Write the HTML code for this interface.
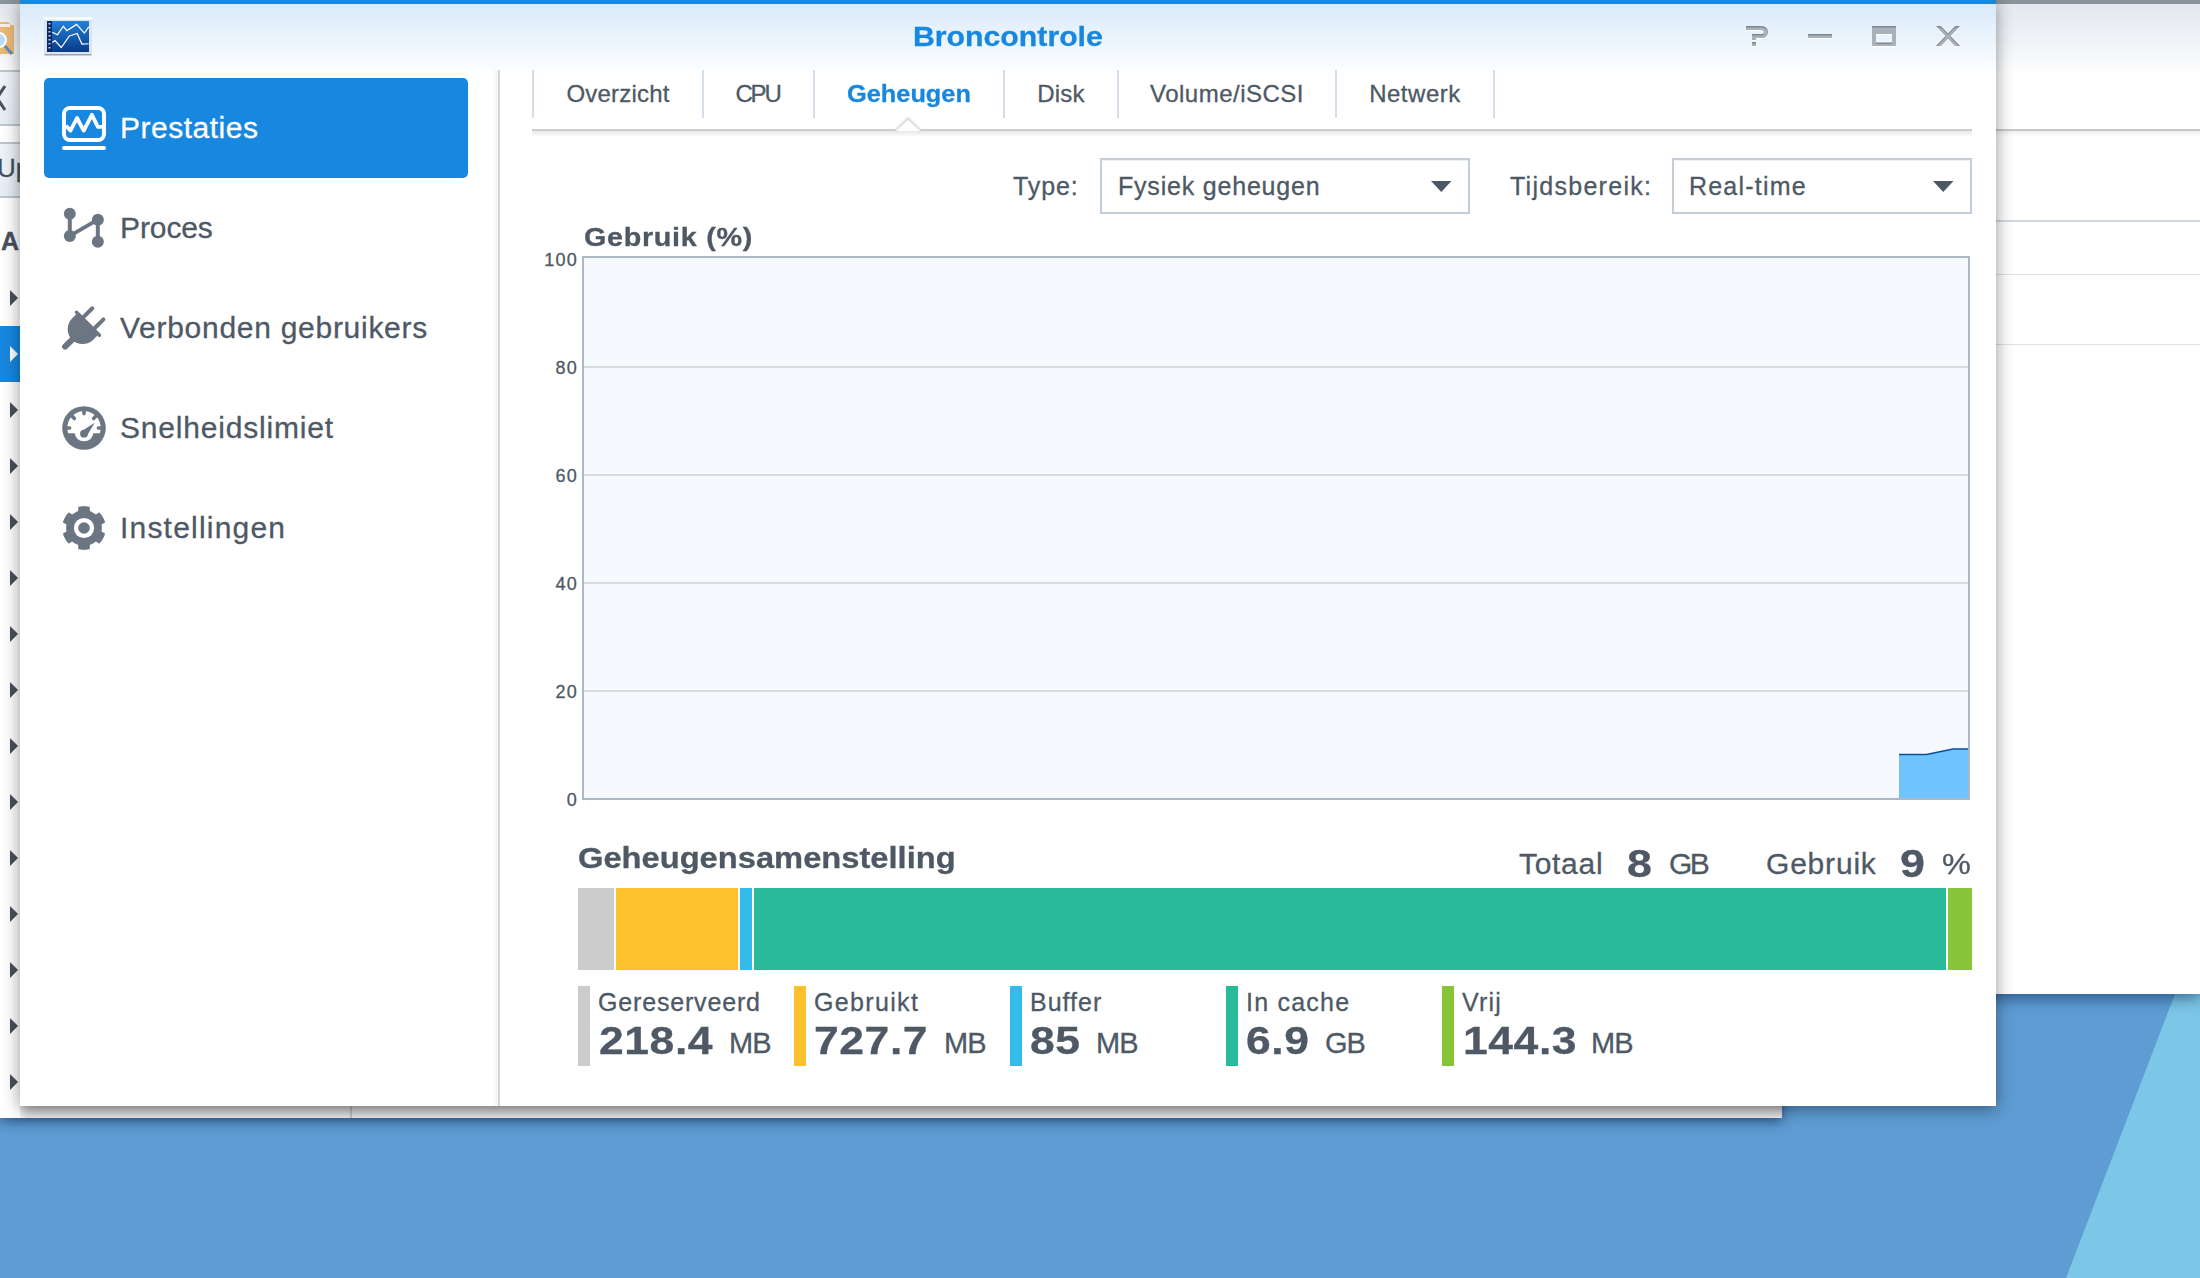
<!DOCTYPE html>
<html><head><meta charset="utf-8">
<style>
*{margin:0;padding:0;box-sizing:border-box}
html,body{width:2200px;height:1278px;overflow:hidden}
body{position:relative;background:#5e9cd3;font-family:"Liberation Sans",sans-serif;color:#4e5965}
.a{position:absolute}
.t{position:absolute;white-space:nowrap;line-height:1;-webkit-text-stroke:.3px currentColor}
</style></head><body>
<!-- desktop -->
<svg class="a" style="left:0;top:0" width="2200" height="1278">
  <polygon points="2175,994 2200,994 2200,1278 2066,1278" fill="#7cc6e7"/>
</svg>

<!-- right background window -->
<div class="a" style="left:1900px;top:0;width:300px;height:994px;background:#fff;box-shadow:0 4px 14px rgba(0,30,70,.55)">
  <div class="a" style="left:0;top:0;width:300px;height:4px;background:#8b939b"></div>
  <div class="a" style="left:0;top:4px;width:300px;height:66px;background:linear-gradient(#e3e8ef,#fbfcfd)"></div>
  <div class="a" style="left:0;top:129px;width:300px;height:2px;background:#c6c8ca"></div>
  <div class="a" style="left:0;top:131px;width:300px;height:6px;background:linear-gradient(rgba(0,0,0,.06),rgba(0,0,0,0))"></div>
  <div class="a" style="left:0;top:220px;width:300px;height:2px;background:#cfd9e3"></div>
  <div class="a" style="left:0;top:274px;width:300px;height:1px;background:#dbe2ea"></div>
  <div class="a" style="left:0;top:344px;width:300px;height:1px;background:#dbe2ea"></div>
</div>

<!-- bottom background window -->
<div class="a" style="left:0;top:900px;width:1782px;height:218px;background:#fff;box-shadow:0 3px 12px rgba(0,30,70,.6)">
  <div class="a" style="left:20px;top:206px;width:1762px;height:12px;background:linear-gradient(#c4c4c4,#ececec)"></div>
  <div class="a" style="left:12px;top:206px;width:16px;height:12px;background:linear-gradient(90deg,#fff,rgba(255,255,255,0))"></div>
  <div class="a" style="left:350px;top:206px;width:2px;height:12px;background:rgba(120,130,140,.35)"></div>
</div>

<!-- left background window -->
<div class="a" style="left:0;top:0;width:20px;height:1118px;background:#fff"></div>
<svg class="a" style="left:0;top:0" width="20" height="1118" viewBox="0 0 20 1118">
  <defs><linearGradient id="lh" x1="0" y1="0" x2="0" y2="1"><stop offset="0" stop-color="#e3e7ed"/><stop offset="1" stop-color="#fbfbfc"/></linearGradient>
  <linearGradient id="lb" x1="0" y1="0" x2="0" y2="1"><stop offset="0" stop-color="#eef3f8"/><stop offset="1" stop-color="#e6edf5"/></linearGradient></defs>
  <rect x="0" y="0" width="40" height="4" fill="#8b939b"/>
  <rect x="0" y="4" width="40" height="66" fill="url(#lh)"/>
  <!-- folder icon -->
  <path d="M-6,22 H8 L11,25 H14 V54 H-6 Z" fill="#e9b877"/>
  <rect x="-6" y="24" width="16" height="3" fill="#fff" opacity=".8"/>
  <circle cx="-1" cy="40" r="7" fill="#b7def5" stroke="#fff" stroke-width="2"/>
  <line x1="5" y1="46" x2="12" y2="54" stroke="#5f8eb3" stroke-width="3"/>
  <rect x="0" y="70" width="40" height="2" fill="#bcc6d0"/>
  <rect x="0" y="72" width="40" height="52" fill="url(#lb)"/>
  <path d="M5,86 L-3,98 L5,110" fill="none" stroke="#46515d" stroke-width="3"/>
  <rect x="0" y="124" width="40" height="2" fill="#bcc6d0"/>
  <rect x="0" y="142" width="40" height="2" fill="#bcc6d0"/>
  <rect x="0" y="144" width="40" height="52" fill="url(#lb)"/>
  <rect x="0" y="196" width="40" height="2" fill="#bcc6d0"/>
  <rect x="0" y="326" width="40" height="56" fill="#1787e0"/>
  <path d="M10,290 L18,298 L10,306 Z" fill="#47525e"/>
  <path d="M10,346 L18,354 L10,362 Z" fill="#ffffff"/>
  <path d="M10,402 L18,410 L10,418 Z" fill="#47525e"/>
  <path d="M10,458 L18,466 L10,474 Z" fill="#47525e"/>
  <path d="M10,514 L18,522 L10,530 Z" fill="#47525e"/>
  <path d="M10,570 L18,578 L10,586 Z" fill="#47525e"/>
  <path d="M10,626 L18,634 L10,642 Z" fill="#47525e"/>
  <path d="M10,682 L18,690 L10,698 Z" fill="#47525e"/>
  <path d="M10,738 L18,746 L10,754 Z" fill="#47525e"/>
  <path d="M10,794 L18,802 L10,810 Z" fill="#47525e"/>
  <path d="M10,850 L18,858 L10,866 Z" fill="#47525e"/>
  <path d="M10,906 L18,914 L10,922 Z" fill="#47525e"/>
  <path d="M10,962 L18,970 L10,978 Z" fill="#47525e"/>
  <path d="M10,1018 L18,1026 L10,1034 Z" fill="#47525e"/>
  <path d="M10,1074 L18,1082 L10,1090 Z" fill="#47525e"/>
</svg>
<div class="t" style="left:-3px;top:155px;font-size:26px;color:#46515d">Up</div>
<div class="t" style="left:1px;top:229px;font-size:25px;font-weight:700;color:#46515d">A</div>
<!-- main window -->
<div class="a" id="win" style="left:20px;top:0;width:1976px;height:1106px;background:#fff;box-shadow:0 3px 16px rgba(0,0,0,.42)">
  <div class="a" style="left:0;top:0;width:1976px;height:4px;background:#1787e0"></div>
  <div class="a" style="left:0;top:4px;width:1976px;height:66px;background:linear-gradient(#d9eaf9,#fbfdff)"></div>
</div>


<!-- app icon -->
<svg class="a" style="left:42px;top:16px" width="52" height="44" viewBox="0 0 52 44">
  <defs>
    <linearGradient id="ig" x1="0" y1="0" x2="0" y2="1"><stop offset="0" stop-color="#2382d8"/><stop offset="1" stop-color="#083a8a"/></linearGradient>
    <linearGradient id="isd" x1="0" y1="0" x2="0" y2="1"><stop offset="0" stop-color="#6d7783"/><stop offset="1" stop-color="#6d7783" stop-opacity="0"/></linearGradient>
  </defs>
  <rect x="2.5" y="37.5" width="47" height="3" fill="url(#isd)"/>
  <rect x="2" y="2" width="48" height="36" fill="#dce4ec"/>
  <rect x="2" y="1.5" width="48" height="2" fill="#fff"/>
  <rect x="5" y="5" width="42" height="31" fill="url(#ig)"/>
  <rect x="5" y="5" width="5" height="31" fill="#072a6b"/>
  <g fill="#fff" opacity=".8"><rect x="6.5" y="7" width="2" height="1.5"/><rect x="6.5" y="11" width="2" height="1.5"/><rect x="6.5" y="15" width="2" height="1.5"/><rect x="6.5" y="19" width="2" height="1.5"/><rect x="6.5" y="23" width="2" height="1.5"/><rect x="6.5" y="27" width="2" height="1.5"/><rect x="6.5" y="31" width="2" height="1.5"/></g>
  <polyline points="10.2,16.2 15.5,18.7 21.4,10.25 24.9,14.6 34.6,8.4 42.4,17.1 46.75,10.9" fill="none" stroke="#fff" stroke-width="1.2"/>
  <polyline points="10.2,26.5 13,24.6 19.25,31.5 27.4,19.9 35.2,17.4 39.9,28.1 46.75,27.75" fill="none" stroke="#fff" stroke-width="1.2"/>
</svg>

<div class="t" style="left:913px;top:24px;font-size:27px;font-weight:700;color:#1787e0;transform:scaleX(1.12);transform-origin:0 0">Broncontrole</div>

<!-- window controls -->
<svg class="a" style="left:1740px;top:20px" width="230" height="32" viewBox="0 0 230 32">
  <defs>
    <path id="wq" d="M6,6 H22 A6,6 0 0 1 22,18 H16 V19.8 H12 V14 H22 A2,2 0 0 0 22,10 H6 Z M12,22 H16 V25.8 H12 Z"/>
    <path id="wm" d="M68,14 H92 V18 H68 Z"/>
    <path id="wx" d="M132,6 H156 V26 H132 Z M136,14 V22.5 H152 V14 Z"/>
    <path id="wc" d="M196,6 h4.8 l7.2,7.4 l7.2,-7.4 h4.8 l-9.6,10 l9.6,10 h-4.8 l-7.2,-7.4 l-7.2,7.4 h-4.8 l9.6,-10 Z"/>
    <clipPath id="wcl"><use href="#wq"/><use href="#wm"/><use href="#wx"/><use href="#wc"/></clipPath>
  </defs>
  <g fill="#fff" opacity=".85" transform="translate(0,1.3)"><use href="#wq"/><use href="#wm"/><use href="#wx"/><use href="#wc"/></g>
  <g fill="#80878f"><use href="#wq"/><use href="#wm"/><use href="#wx"/><use href="#wc"/></g>
  <g clip-path="url(#wcl)"><g fill="#a9b1ba" transform="translate(0,1.5)"><use href="#wq"/><use href="#wm"/><use href="#wx"/><use href="#wc"/></g></g>
</svg>

<!-- sidebar -->
<div class="a" style="left:492px;top:70px;width:6px;height:1036px;background:linear-gradient(90deg,rgba(0,0,0,0),rgba(0,0,0,.05))"></div>
<div class="a" style="left:498px;top:70px;width:2px;height:1036px;background:#d6d6d6"></div>

<div class="a" style="left:44px;top:78px;width:424px;height:100px;background:#1787e0;border-radius:5px"></div>
<svg class="a" style="left:56px;top:100px" width="56" height="56" viewBox="0 0 56 56">
  <rect x="8" y="8" width="40" height="32" rx="6" fill="none" stroke="#fff" stroke-width="4"/>
  <rect x="6" y="46" width="44" height="4" rx="2" fill="#fff"/>
  <polyline points="10,25.7 14.5,30.6 21,18 27.7,30.6 35.9,14.8 41.9,26.8 46,26.8" fill="none" stroke="#fff" stroke-width="3.8" stroke-linejoin="round"/>
</svg>
<div class="t" style="left:120px;top:113px;font-size:30px;color:#fff;letter-spacing:.5px">Prestaties</div>

<svg class="a" style="left:56px;top:200px" width="56" height="56" viewBox="0 0 56 56">
  <g fill="#6c7682" stroke="#6c7682">
    <line x1="13.8" y1="13.8" x2="13.8" y2="35.9" stroke-width="4"/>
    <line x1="41.85" y1="19.7" x2="41.85" y2="41.85" stroke-width="4"/>
    <line x1="13.8" y1="35.9" x2="41.85" y2="19.7" stroke-width="3.8"/>
    <circle cx="13.8" cy="13.8" r="6" stroke="none"/>
    <circle cx="13.8" cy="35.9" r="6" stroke="none"/>
    <circle cx="41.85" cy="19.7" r="6" stroke="none"/>
    <circle cx="41.85" cy="41.85" r="6" stroke="none"/>
  </g>
</svg>
<div class="t" style="left:120px;top:213px;font-size:30px;letter-spacing:-.1px">Proces</div>

<svg class="a" style="left:56px;top:300px" width="56" height="56" viewBox="0 0 56 56">
  <g transform="translate(32.3,23.4) rotate(45)" fill="#6c7682" stroke="#6c7682" stroke-linecap="round">
    <path d="M-15,0 H15 V8 A15,15 0 0 1 -15,8 Z" stroke="none"/>
    <line x1="-16.2" y1="0.5" x2="16.2" y2="0.5" stroke-width="3.5"/>
    <line x1="-7.9" y1="0" x2="-7.9" y2="-13.5" stroke-width="4"/>
    <line x1="7.9" y1="0" x2="7.9" y2="-13.5" stroke-width="4"/>
    <line x1="0" y1="20" x2="0" y2="32.8" stroke-width="6"/>
  </g>
</svg>
<div class="t" style="left:120px;top:313px;font-size:30px;letter-spacing:.72px">Verbonden gebruikers</div>

<svg class="a" style="left:56px;top:400px" width="56" height="56" viewBox="0 0 56 56">
  <circle cx="28" cy="28" r="21.8" fill="#6c7682"/>
  <path d="M12.1,33.3 A16.8,16.8 0 1 1 43.9,33.3 H37.2 A9.2,7.9 0 0 1 18.8,33.3 Z" fill="#fff"/>
  <g stroke="#6c7682" stroke-width="3.6" stroke-linecap="round">
    <line x1="28" y1="9" x2="28" y2="13.6"/>
    <line x1="9" y1="28" x2="13.6" y2="28"/>
    <line x1="42.4" y1="28" x2="47" y2="28"/>
    <line x1="15" y1="15" x2="18.4" y2="18.4"/>
    <line x1="41" y1="15" x2="37.6" y2="18.4"/>
  </g>
  <circle cx="28" cy="33.7" r="3.9" fill="#6c7682"/>
  <path d="M25.4,31.2 L38.8,22.8 L30.6,36.2 Z" fill="#6c7682"/>
</svg>
<div class="t" style="left:120px;top:413px;font-size:30px;letter-spacing:.8px">Snelheidslimiet</div>

<svg class="a" style="left:56px;top:500px" width="56" height="56" viewBox="0 0 56 56">
  <defs><clipPath id="gc"><circle cx="28" cy="28" r="21.9"/></clipPath></defs>
  <g clip-path="url(#gc)"><g transform="translate(28,28)" fill="#6c7682">
    <circle r="17.9"/>
    <rect x="-5.8" y="-21.9" width="11.6" height="8" />
    <rect x="-5.8" y="-21.9" width="11.6" height="8" transform="rotate(60)"/>
    <rect x="-5.8" y="-21.9" width="11.6" height="8" transform="rotate(120)"/>
    <rect x="-5.8" y="-21.9" width="11.6" height="8" transform="rotate(180)"/>
    <rect x="-5.8" y="-21.9" width="11.6" height="8" transform="rotate(240)"/>
    <rect x="-5.8" y="-21.9" width="11.6" height="8" transform="rotate(300)"/>
    <circle r="10.1" fill="#fff"/>
    <circle r="5.8"/>
  </g></g>
</svg>
<div class="t" style="left:120px;top:513px;font-size:30px;letter-spacing:1.2px">Instellingen</div>

<!-- tabs -->
<div class="a" style="left:532px;top:70px;width:2px;height:48px;background:#d5dee8"></div>
<div class="a" style="left:702px;top:70px;width:2px;height:48px;background:#d5dee8"></div>
<div class="a" style="left:813px;top:70px;width:2px;height:48px;background:#d5dee8"></div>
<div class="a" style="left:1003px;top:70px;width:2px;height:48px;background:#d5dee8"></div>
<div class="a" style="left:1117px;top:70px;width:2px;height:48px;background:#d5dee8"></div>
<div class="a" style="left:1335px;top:70px;width:2px;height:48px;background:#d5dee8"></div>
<div class="a" style="left:1493px;top:70px;width:2px;height:48px;background:#d5dee8"></div>
<div class="t" style="left:534px;width:168px;text-align:center;top:82px;font-size:24px;letter-spacing:.2px">Overzicht</div>
<div class="t" style="left:704px;width:109px;text-align:center;top:82px;font-size:24px;letter-spacing:-2.2px;text-indent:-2px">CPU</div>
<div class="t" style="left:847px;top:82px;font-size:24px;font-weight:700;color:#1787e0;transform:scaleX(1.056);transform-origin:0 0">Geheugen</div>
<div class="t" style="left:1005px;width:112px;text-align:center;top:82px;font-size:24px;letter-spacing:.2px">Disk</div>
<div class="t" style="left:1119px;width:216px;text-align:center;top:82px;font-size:24px;letter-spacing:.5px">Volume/iSCSI</div>
<div class="t" style="left:1337px;width:156px;text-align:center;top:82px;font-size:24px;letter-spacing:.53px">Netwerk</div>
<svg class="a" style="left:532px;top:116px" width="1442" height="24" viewBox="0 0 1442 24">
  <defs><linearGradient id="sh" x1="0" y1="0" x2="0" y2="1"><stop offset="0" stop-color="#000" stop-opacity=".09"/><stop offset="1" stop-color="#000" stop-opacity="0"/></linearGradient>
  <filter id="tb" x="-20%" y="-50%" width="140%" height="200%"><feGaussianBlur stdDeviation="1.2"/></filter></defs>
  <rect x="0" y="15" width="1440" height="6" fill="url(#sh)"/>
  <path d="M364,14.5 L376,3 L388,14.5" fill="none" stroke="#000" stroke-opacity=".18" stroke-width="2.5" filter="url(#tb)"/>
  <path d="M0,14 H364 M388,14 H1440" fill="none" stroke="#cdcdcd" stroke-width="2"/>
  <path d="M364,15 L376,4 L388,15 Z" fill="#fff"/>
  <path d="M363,14.5 L376,2.5 L389,14.5" fill="none" stroke="#e0e0e0" stroke-width="1"/>
</svg>

<!-- dropdowns -->
<div class="t" style="left:1013px;top:174px;font-size:25px;letter-spacing:.9px">Type:</div>
<div class="a" style="left:1100px;top:158px;width:370px;height:56px;border:2px solid #c4ced9;background:#fff;box-shadow:inset 0 1px 0 #eef2f6"></div>
<div class="t" style="left:1118px;top:174px;font-size:25px;letter-spacing:.8px">Fysiek geheugen</div>
<svg class="a" style="left:1431px;top:181px" width="21" height="12"><path d="M0,0 H20.5 L10.25,11 Z" fill="#4d5865"/></svg>
<div class="t" style="left:1510px;top:174px;font-size:25px;letter-spacing:1.28px">Tijdsbereik:</div>
<div class="a" style="left:1672px;top:158px;width:300px;height:56px;border:2px solid #c4ced9;background:#fff;box-shadow:inset 0 1px 0 #eef2f6"></div>
<div class="t" style="left:1689px;top:174px;font-size:25px;letter-spacing:1.2px">Real-time</div>
<svg class="a" style="left:1933px;top:181px" width="21" height="12"><path d="M0,0 H20.5 L10.25,11 Z" fill="#4d5865"/></svg>

<!-- chart -->
<div class="t" style="left:584px;top:225px;font-size:25px;font-weight:700;letter-spacing:.6px;transform:scaleX(1.15);transform-origin:0 0">Gebruik (%)</div>
<div class="a" style="left:582px;top:256px;width:1388px;height:544px;background:#f6f9fe;border:2px solid #acb8c3"></div>
<div class="a" style="left:584px;top:366px;width:1384px;height:2px;background:#d9dcdc"></div>
<div class="a" style="left:584px;top:474px;width:1384px;height:2px;background:#d9dcdc"></div>
<div class="a" style="left:584px;top:582px;width:1384px;height:2px;background:#d9dcdc"></div>
<div class="a" style="left:584px;top:690px;width:1384px;height:2px;background:#d9dcdc"></div>
<svg class="a" style="left:1890px;top:740px" width="80" height="60" viewBox="0 0 80 60">
  <path d="M9,14.5 L36.5,14.5 L63,9 L78,9 V58 H9 Z" fill="#70c4fd"/>
  <polyline points="9,14.5 36.5,14.5 63,9 78,9" fill="none" stroke="#0b4f9c" stroke-width="1.6"/>
</svg>
<div class="t" style="left:520px;width:58px;text-align:right;top:251px;font-size:18px;letter-spacing:1.2px">100</div>
<div class="t" style="left:520px;width:58px;text-align:right;top:359px;font-size:18px;letter-spacing:1.2px">80</div>
<div class="t" style="left:520px;width:58px;text-align:right;top:467px;font-size:18px;letter-spacing:1.2px">60</div>
<div class="t" style="left:520px;width:58px;text-align:right;top:575px;font-size:18px;letter-spacing:1.2px">40</div>
<div class="t" style="left:520px;width:58px;text-align:right;top:683px;font-size:18px;letter-spacing:1.2px">20</div>
<div class="t" style="left:520px;width:58px;text-align:right;top:791px;font-size:18px;letter-spacing:1.2px">0</div>

<!-- composition -->
<div class="t" style="left:578px;top:843px;font-size:30px;font-weight:700;transform:scaleX(1.089);transform-origin:0 0">Geheugensamenstelling</div>
<div class="t" style="left:1519px;top:849px;font-size:30px;letter-spacing:.7px">Totaal</div>
<div class="t" style="left:1627px;top:845px;font-size:38px;font-weight:700;transform:scaleX(1.18);transform-origin:0 0">8</div>
<div class="t" style="left:1669px;top:849px;font-size:30px;letter-spacing:-2.7px">GB</div>
<div class="t" style="left:1766px;top:849px;font-size:30px;letter-spacing:.8px">Gebruik</div>
<div class="t" style="left:1900px;top:845px;font-size:38px;font-weight:700;transform:scaleX(1.18);transform-origin:0 0">9</div>
<div class="t" style="left:1942px;top:849px;font-size:30px;transform:scaleX(1.08);transform-origin:0 0">%</div>

<div class="a" style="left:578px;top:888px;width:36px;height:82px;background:#cccccc"></div>
<div class="a" style="left:616px;top:888px;width:122px;height:82px;background:#fdc12e"></div>
<div class="a" style="left:740px;top:888px;width:12px;height:82px;background:#33bbec"></div>
<div class="a" style="left:754px;top:888px;width:1192px;height:82px;background:#29ba9a"></div>
<div class="a" style="left:1948px;top:888px;width:24px;height:82px;background:#88c437"></div>

<div class="a" style="left:578px;top:986px;width:12px;height:80px;background:#cccccc"></div>
<div class="a" style="left:794px;top:986px;width:12px;height:80px;background:#fdc12e"></div>
<div class="a" style="left:1010px;top:986px;width:12px;height:80px;background:#33bbec"></div>
<div class="a" style="left:1226px;top:986px;width:12px;height:80px;background:#29ba9a"></div>
<div class="a" style="left:1442px;top:986px;width:12px;height:80px;background:#88c437"></div>

<div class="t" style="left:598px;top:990px;font-size:25px;letter-spacing:.83px">Gereserveerd</div>
<div class="t" style="left:814px;top:990px;font-size:25px;letter-spacing:1.34px">Gebruikt</div>
<div class="t" style="left:1030px;top:990px;font-size:25px;letter-spacing:1px">Buffer</div>
<div class="t" style="left:1246px;top:990px;font-size:25px;letter-spacing:1.23px">In cache</div>
<div class="t" style="left:1462px;top:990px;font-size:25px;letter-spacing:1.2px">Vrij</div>

<div class="t" style="left:599px;top:1022px;font-size:38px;font-weight:700;letter-spacing:.5px;transform:scaleX(1.17);transform-origin:0 0">218.4</div>
<div class="t" style="left:729px;top:1029px;font-size:29px;letter-spacing:-1px">MB</div>
<div class="t" style="left:814px;top:1022px;font-size:38px;font-weight:700;letter-spacing:.5px;transform:scaleX(1.17);transform-origin:0 0">727.7</div>
<div class="t" style="left:944px;top:1029px;font-size:29px;letter-spacing:-1px">MB</div>
<div class="t" style="left:1030px;top:1022px;font-size:38px;font-weight:700;letter-spacing:.5px;transform:scaleX(1.17);transform-origin:0 0">85</div>
<div class="t" style="left:1096px;top:1029px;font-size:29px;letter-spacing:-1px">MB</div>
<div class="t" style="left:1246px;top:1022px;font-size:38px;font-weight:700;letter-spacing:.5px;transform:scaleX(1.17);transform-origin:0 0">6.9</div>
<div class="t" style="left:1325px;top:1029px;font-size:29px;letter-spacing:-1px">GB</div>
<div class="t" style="left:1463px;top:1022px;font-size:38px;font-weight:700;letter-spacing:.5px;transform:scaleX(1.17);transform-origin:0 0">144.3</div>
<div class="t" style="left:1591px;top:1029px;font-size:29px;letter-spacing:-1px">MB</div>
</body></html>
